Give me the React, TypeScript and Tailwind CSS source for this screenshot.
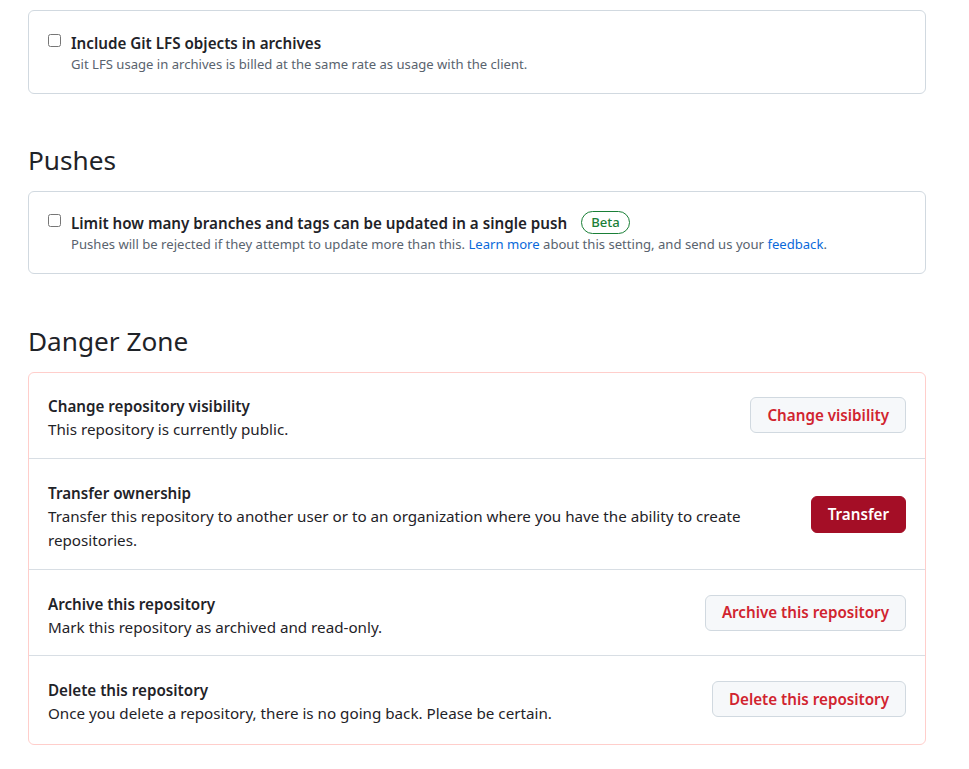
const ROWS = [
  {
    title: 'Change repository visibility',
    desc: 'This repository is currently public.',
    action: 'Change visibility',
    primary: false,
  },
  {
    title: 'Transfer ownership',
    desc: 'Transfer this repository to another user or to an organization where you have the ability to create repositories.',
    action: 'Transfer',
    primary: true,
  },
  {
    title: 'Archive this repository',
    desc: 'Mark this repository as archived and read-only.',
    action: 'Archive this repository',
    primary: false,
  },
  {
    title: 'Delete this repository',
    desc: 'Once you delete a repository, there is no going back. Please be certain.',
    action: 'Delete this repository',
    primary: false,
  },
]

export default function App() {
  return (
    <div
      className="min-h-screen bg-white text-[#1f2328]"
      style={{ fontFamily: '"Noto Sans", sans-serif' }}
    >
      <div className="ml-[28px] w-[898px] pt-[10px]">
        {/* LFS */}
        <div className="rounded-md border border-[#d1d9e0] px-[19px] pt-[21px] pb-[19px]">
          <div className="flex items-start gap-[10px]">
            <input type="checkbox" className="mt-[2px] h-[13px] w-[13px]" />
            <div>
              <div className="text-[15.2px] font-semibold leading-[22px]">Include Git LFS objects in archives</div>
              <div className="text-[13.1px] leading-[20px] text-[#59636e]">
                Git LFS usage in archives is billed at the same rate as usage with the client.
              </div>
            </div>
          </div>
        </div>

        {/* Pushes */}
        <h2 className="mt-[47px] mb-[12px] text-[26.2px] leading-[38px] font-normal">Pushes</h2>
        <div className="rounded-md border border-[#d1d9e0] px-[19px] py-[19px]">
          <div className="flex items-start gap-[10px]">
            <input type="checkbox" className="mt-[3px] h-[13px] w-[13px]" />
            <div>
              <div className="flex items-center gap-[14px]">
                <span className="text-[15.2px] font-semibold leading-[22px]">
                  Limit how many branches and tags can be updated in a single push
                </span>
                <span className="inline-flex h-[23px] items-center rounded-full border border-[#1a7f37] px-[9px] text-[13.1px] font-medium text-[#1a7f37]">
                  Beta
                </span>
              </div>
              <div className="text-[13.1px] leading-[20px] text-[#59636e]">
                Pushes will be rejected if they attempt to update more than this.{' '}
                <a className="text-[#0969da]">Learn more</a> about this setting, and send us your{' '}
                <a className="text-[#0969da]">feedback</a>.
              </div>
            </div>
          </div>
        </div>

        {/* Danger zone */}
        <h2 className="mt-[48px] mb-[12px] text-[26.2px] leading-[38px] font-normal">Danger Zone</h2>
        <div className="rounded-md border border-[#ffcecb]">
          {ROWS.map((row, i) => (
            <div
              key={row.title}
              className={`flex items-center justify-between gap-16 px-[19px] ${
                i === 0 ? 'pt-[22px]' : 'pt-[23px] border-t border-[#d8dee4]'
              } ${i === ROWS.length - 1 ? 'pb-[18px]' : 'pb-[16px]'}`}
            >
              <div>
                <div className="text-[15.2px] font-semibold leading-[22px]">{row.title}</div>
                <div className="text-[15.2px] leading-[24.5px]">{row.desc}</div>
              </div>
              {row.primary ? (
                <button className="-mt-[6px] h-[37px] shrink-0 rounded-md border border-[#a40e26] bg-[#a40e26] px-4 text-[15.2px] font-semibold text-white">
                  {row.action}
                </button>
              ) : (
                <button className="-mt-[6px] h-[36px] shrink-0 rounded-md border border-[#d1d9e0] bg-[#f6f8fa] px-4 text-[15.2px] font-semibold text-[#d1242f]">
                  {row.action}
                </button>
              )}
            </div>
          ))}
        </div>
      </div>
    </div>
  )
}
